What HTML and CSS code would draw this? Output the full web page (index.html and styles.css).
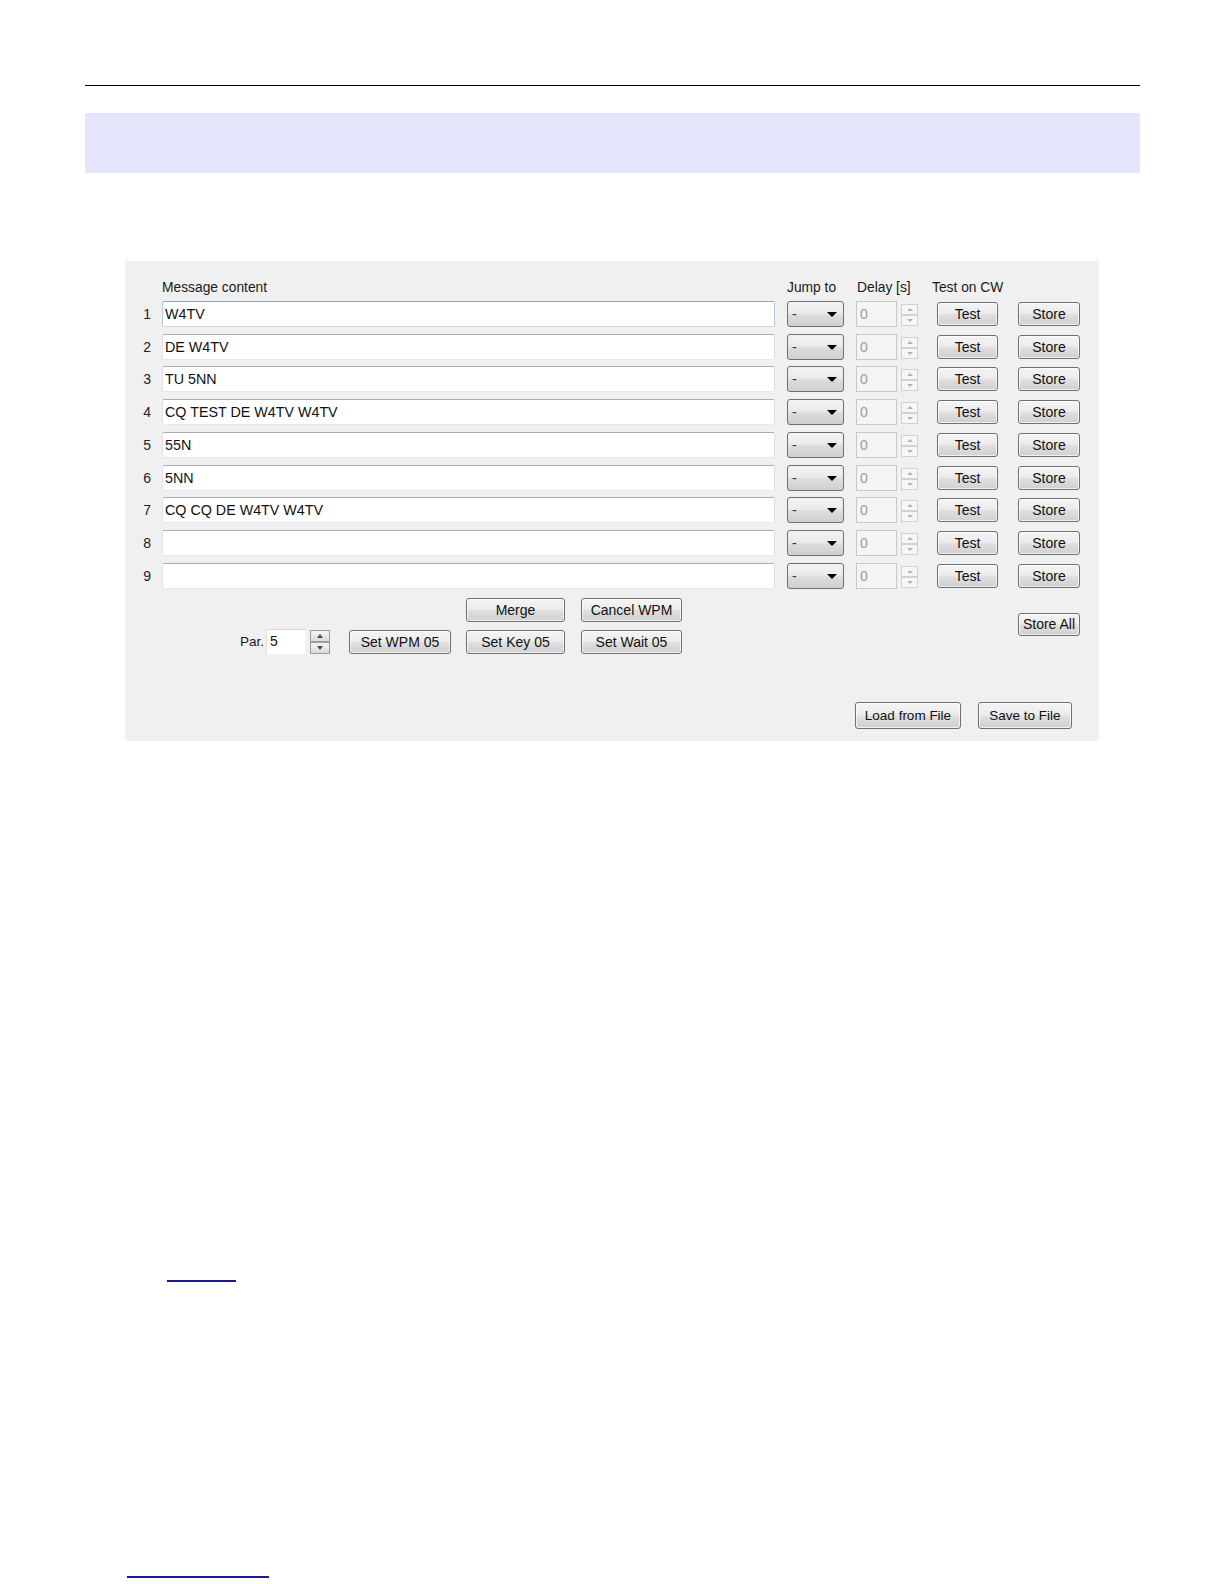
FILE: index.html
```html
<!DOCTYPE html>
<html>
<head>
<meta charset="utf-8">
<title>CW Messages</title>
<link rel="stylesheet" href="styles.css">
</head>
<body>
<div class="page">
  <div class="rule"></div>
  <div class="band"></div>

  <div class="panel">
    <div class="grid">
      <div class="hdr c-msg">Message content</div>
      <div class="hdr c-jump">Jump to</div>
      <div class="hdr c-delay">Delay [s]</div>
      <div class="hdr c-test">Test on CW</div>

      <div class="num">1</div>
      <div class="field focus">W4TV</div>
      <div class="combo"><span>-</span><i class="caret"></i></div>
      <div class="delay">0</div>
      <div class="spin dis"><span class="sb up"></span><span class="sb down"></span></div>
      <div class="btn test">Test</div>
      <div class="btn store">Store</div>

      <div class="num">2</div>
      <div class="field">DE W4TV</div>
      <div class="combo"><span>-</span><i class="caret"></i></div>
      <div class="delay">0</div>
      <div class="spin dis"><span class="sb up"></span><span class="sb down"></span></div>
      <div class="btn test">Test</div>
      <div class="btn store">Store</div>

      <div class="num">3</div>
      <div class="field">TU 5NN</div>
      <div class="combo"><span>-</span><i class="caret"></i></div>
      <div class="delay">0</div>
      <div class="spin dis"><span class="sb up"></span><span class="sb down"></span></div>
      <div class="btn test">Test</div>
      <div class="btn store">Store</div>

      <div class="num">4</div>
      <div class="field">CQ TEST DE W4TV W4TV</div>
      <div class="combo"><span>-</span><i class="caret"></i></div>
      <div class="delay">0</div>
      <div class="spin dis"><span class="sb up"></span><span class="sb down"></span></div>
      <div class="btn test">Test</div>
      <div class="btn store">Store</div>

      <div class="num">5</div>
      <div class="field">55N</div>
      <div class="combo"><span>-</span><i class="caret"></i></div>
      <div class="delay">0</div>
      <div class="spin dis"><span class="sb up"></span><span class="sb down"></span></div>
      <div class="btn test">Test</div>
      <div class="btn store">Store</div>

      <div class="num">6</div>
      <div class="field">5NN</div>
      <div class="combo"><span>-</span><i class="caret"></i></div>
      <div class="delay">0</div>
      <div class="spin dis"><span class="sb up"></span><span class="sb down"></span></div>
      <div class="btn test">Test</div>
      <div class="btn store">Store</div>

      <div class="num">7</div>
      <div class="field">CQ CQ DE W4TV W4TV</div>
      <div class="combo"><span>-</span><i class="caret"></i></div>
      <div class="delay">0</div>
      <div class="spin dis"><span class="sb up"></span><span class="sb down"></span></div>
      <div class="btn test">Test</div>
      <div class="btn store">Store</div>

      <div class="num">8</div>
      <div class="field"></div>
      <div class="combo"><span>-</span><i class="caret"></i></div>
      <div class="delay">0</div>
      <div class="spin dis"><span class="sb up"></span><span class="sb down"></span></div>
      <div class="btn test">Test</div>
      <div class="btn store">Store</div>

      <div class="num">9</div>
      <div class="field"></div>
      <div class="combo"><span>-</span><i class="caret"></i></div>
      <div class="delay">0</div>
      <div class="spin dis"><span class="sb up"></span><span class="sb down"></span></div>
      <div class="btn test">Test</div>
      <div class="btn store">Store</div>
    </div>

    <div class="lower">
      <div class="lower-left">
        <div class="lrow lrow-a">
          <div class="btn w99">Merge</div>
          <div class="btn w101 ml16">Cancel WPM</div>
        </div>
        <div class="lrow lrow-b">
          <span class="par">Par.</span>
          <div class="parin">5</div>
          <div class="spin pspin"><span class="sb up"></span><span class="sb down"></span></div>
          <div class="btn w102 ml19">Set WPM 05</div>
          <div class="btn w99 ml15">Set Key 05</div>
          <div class="btn w101 ml16">Set Wait 05</div>
        </div>
      </div>
      <div class="btn storeall">Store All</div>
    </div>

    <div class="files">
      <div class="btn load">Load from File</div>
      <div class="btn save">Save to File</div>
    </div>
  </div>

  <a class="ulink link1" href="#"></a>
  <a class="ulink link2" href="#"></a>
</div>
</body>
</html>
```

FILE: styles.css
```css
html, body {
  margin: 0;
  padding: 0;
  background: #ffffff;
}

body {
  font-family: "Liberation Sans", Arial, sans-serif;
  font-size: 14px;
  color: #111111;
}

.page {
  padding: 0 84px 0 85px;
}

.rule {
  margin-top: 85px;
  height: 0;
  border-top: 1px solid #000000;
}

.band {
  margin-top: 27px;
  height: 60px;
  background: #e5e5fc;
}

.panel {
  margin: 88px 0 0 40px;
  width: 974px;
  box-sizing: border-box;
  background: #f0f0f0;
  padding: 18.5px 19px 12px 0;
}

.grid {
  display: grid;
  grid-template-columns: 37px 625px 69px 45px 36px 81px 62px;
  grid-template-rows: 14.5px repeat(9, 26px);
  row-gap: 6.75px;
}

.hdr {
  line-height: 16px;
  white-space: nowrap;
  color: #1a1a1a;
  font-size: 13.8px;
}

.c-msg { grid-column: 2; }
.c-jump { grid-column: 3; }
.c-delay { grid-column: 4; padding-left: 1px; }
.c-test { grid-column: 5 / span 2; padding-left: 31px; }

.num {
  grid-column: 1;
  text-align: right;
  padding-right: 11px;
  line-height: 26px;
  color: #222222;
}

.field {
  width: 613px;
  height: 26px;
  box-sizing: border-box;
  background: #ffffff;
  border: 1px solid;
  border-color: #abadb3 #dbdfe6 #e3e9ef #e2e3ea;
  border-radius: 2px;
  padding: 0 2px;
  line-height: 24px;
  font-size: 14.3px;
  white-space: nowrap;
  color: #111111;
}

.field.focus {
  border-color: #8aa4c2 #b4c8df #c5d6e8 #b4c8df;
}

.combo {
  width: 57px;
  height: 26px;
  box-sizing: border-box;
  border: 1px solid #6f6f6f;
  border-radius: 3px;
  background: linear-gradient(#f3f3f3 0%, #ebebeb 45%, #dcdcdc 55%, #cfcfcf 100%);
  display: flex;
  align-items: center;
  justify-content: space-between;
  padding: 0 6px 0 4px;
  color: #333333;
}

.caret {
  width: 0;
  height: 0;
  border-left: 5px solid transparent;
  border-right: 5px solid transparent;
  border-top: 5px solid #000000;
  margin-top: 1px;
}

.delay {
  width: 41px;
  height: 26px;
  box-sizing: border-box;
  border: 1px solid #c8c8c8;
  background: #f4f4f4;
  padding-left: 3px;
  line-height: 24px;
  color: #9c9c9c;
}

.spin {
  display: flex;
  flex-direction: column;
  align-self: center;
}

.spin.dis {
  width: 17px;
  margin-top: 2px;
}

.sb {
  display: flex;
  align-items: center;
  justify-content: center;
  box-sizing: border-box;
  height: 11px;
}

.spin.dis .sb {
  border: 1px solid #d2d2d2;
  background: #f6f6f6;
}

.sb::after {
  content: "";
  width: 0;
  height: 0;
  border-left: 3px solid transparent;
  border-right: 3px solid transparent;
}

.spin.dis .up::after { border-bottom: 3px solid #b4b4b4; }
.spin.dis .down::after { border-top: 3px solid #b4b4b4; }

.btn {
  box-sizing: border-box;
  height: 24px;
  border: 1px solid #707070;
  border-radius: 3px;
  background: linear-gradient(#f4f4f4 0%, #ececec 45%, #dedede 55%, #d0d0d0 100%);
  box-shadow: inset 0 0 0 1px rgba(255, 255, 255, 0.7);
  text-align: center;
  line-height: 22px;
  white-space: nowrap;
  color: #111111;
}

.btn.test {
  width: 61px;
  align-self: center;
  justify-self: start;
}

.btn.store {
  width: 62px;
  align-self: center;
}

.grid > .field,
.grid > .combo,
.grid > .delay {
  align-self: center;
}

.lower {
  display: flex;
  align-items: flex-start;
  margin-top: 9.5px;
}

.lower-left {
  flex: 1;
}

.lrow {
  display: flex;
  align-items: center;
}

.lrow-a {
  padding-left: 341px;
}

.lrow-b {
  margin-top: 7px;
  padding-left: 115px;
}

.w99 { width: 99px; }
.w101 { width: 101px; }
.w102 { width: 102px; }
.ml15 { margin-left: 15px; }
.ml16 { margin-left: 16px; }
.ml19 { margin-left: 19px; }

.par {
  width: 26px;
  line-height: 24px;
  font-size: 13.5px;
  color: #1a1a1a;
}

.parin {
  width: 40px;
  height: 26px;
  box-sizing: border-box;
  background: #ffffff;
  border: 1px solid;
  border-color: #d8d8d8 #f4f4f4 #f4f4f4 #e0e0e0;
  padding-left: 3px;
  line-height: 22px;
  color: #111111;
}

.spin.pspin {
  width: 20px;
  margin-left: 4px;
}

.spin.pspin .sb {
  height: 12px;
  border: 1px solid #9a9a9a;
  background: linear-gradient(#f6f6f6, #dadada);
}

.spin.pspin .up::after { border-bottom: 4px solid #4a4a4a; border-left-width: 3.5px; border-right-width: 3.5px; }
.spin.pspin .down::after { border-top: 4px solid #4a4a4a; border-left-width: 3.5px; border-right-width: 3.5px; }

.storeall {
  width: 62px;
  height: 23px;
  line-height: 21px;
  margin-top: 15px;
  flex: none;
}

.files {
  display: flex;
  justify-content: flex-end;
  margin-top: 47px;
  padding-right: 8px;
}

.load {
  width: 106px;
  height: 27px;
  line-height: 25px;
  font-size: 13.5px;
}

.save {
  width: 94px;
  height: 27px;
  line-height: 25px;
  font-size: 13.5px;
  margin-left: 17px;
}

.ulink {
  display: block;
  height: 0;
  border-bottom: 2px solid #1a1a8c;
}

.link1 {
  width: 69px;
  margin: 539px 0 0 82px;
}

.link2 {
  width: 142px;
  margin: 294px 0 0 42px;
}
```
